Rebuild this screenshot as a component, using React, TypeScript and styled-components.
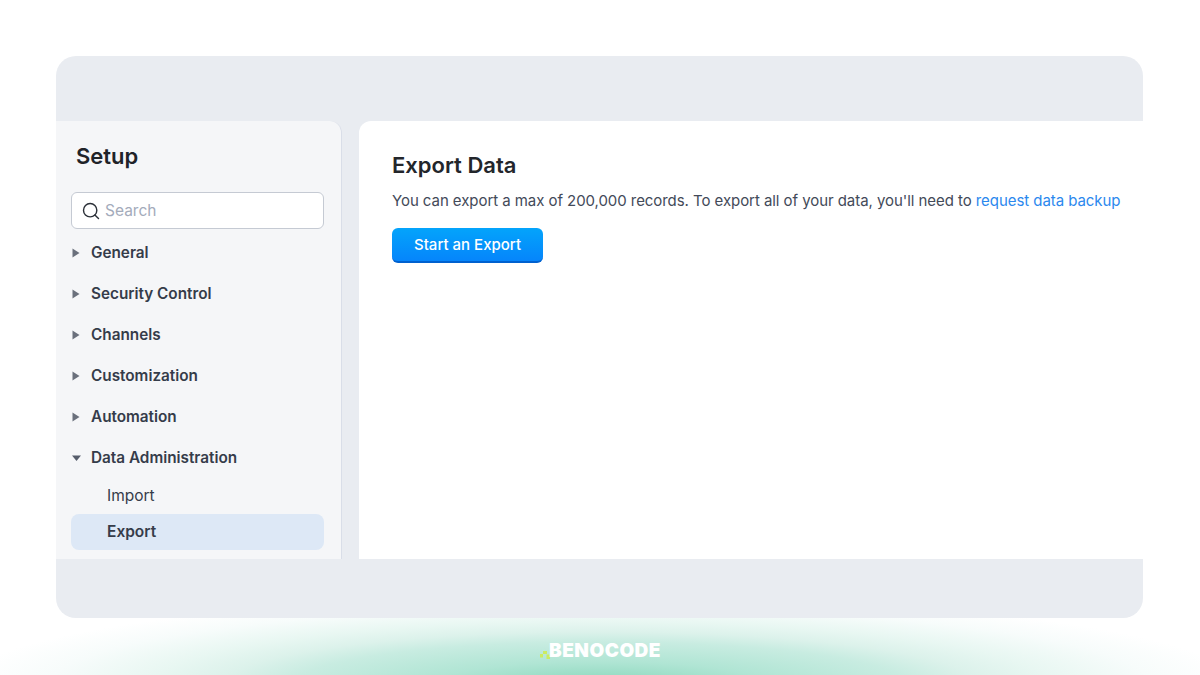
import React from 'react'
import styled, { createGlobalStyle } from 'styled-components'
import { Search } from 'lucide-react'

const GlobalStyle = createGlobalStyle`
  html, body { margin: 0; padding: 0; background: #fff; }
  body { font-family: Inter, "Noto Sans", sans-serif; -webkit-font-smoothing: antialiased; }
`

const Page = styled.div`
  width: 1200px;
  height: 675px;
  overflow: hidden;
  padding: 56px 56px 0;
  box-sizing: border-box;
  display: flex;
  flex-direction: column;
  background:
    radial-gradient(ellipse 640px 90px at 600px 685px, #97dcc4 0%, #97dcc4 10%, #b0e5d4 26%, #c8ece1 48%, #dcf2eb 59%, #e8f7f2 70%, #f7fcfb 86%, #ffffff 100%),
    #fff;
`

const Frame = styled.div`
  width: 1087px;
  height: 562px;
  flex: none;
  background: #e9ecf1;
  border-radius: 20px;
  padding: 65px 0 59px;
  box-sizing: border-box;
`

const Panels = styled.div`
  height: 100%;
  display: flex;
  gap: 17px;
`

const Sidebar = styled.aside`
  width: 286px;
  flex: none;
  box-sizing: border-box;
  background: #f5f6f8;
  border-right: 1px solid #d9dee8;
  border-top-right-radius: 12px;
  padding: 0 17px 0 15px;
`

const SideTitle = styled.h2`
  margin: 0;
  padding: 21px 0 0 5px;
  height: 71px;
  box-sizing: border-box;
  font-size: 22px;
  line-height: 28px;
  font-weight: 600;
  color: #1f2329;
`

const SearchBox = styled.div`
  height: 37px;
  box-sizing: border-box;
  display: flex;
  align-items: center;
  gap: 4px;
  padding-left: 9px;
  background: #fff;
  border: 1px solid #c5cad3;
  border-radius: 6px;
  margin-bottom: 3px;
  color: #2b3038;
`

const SearchText = styled.span`
  font-size: 15.5px;
  color: #a4abbb;
`

const NavList = styled.nav`
  display: flex;
  flex-direction: column;
`

const NavRow = styled.div`
  height: 41px;
  display: flex;
  align-items: center;
  gap: 10px;
  padding-left: 1px;
  font-size: 15.3px;
  font-weight: 600;
  color: #353c4a;
`

const SubList = styled.div`
  display: flex;
  flex-direction: column;
`

const SubRow = styled.div<{ $active?: boolean }>`
  height: 36px;
  display: flex;
  align-items: center;
  padding-left: 36px;
  padding-bottom: 2px;
  box-sizing: border-box;
  border-radius: 8px;
  font-size: 15.5px;
  font-weight: ${p => (p.$active ? 600 : 400)};
  color: #353c4a;
  background: ${p => (p.$active ? '#dde8f6' : 'transparent')};
`

const Main = styled.main`
  flex: 1;
  background: #fff;
  border-top-left-radius: 12px;
  padding: 28px 0 0 33px;
`

const Heading = styled.h1`
  margin: 0 0 8px;
  font-size: 22px;
  line-height: 32px;
  font-weight: 600;
  color: #23262b;
`

const Intro = styled.p`
  margin: 0 0 15px;
  font-size: 15px;
  letter-spacing: -0.06px;
  line-height: 24px;
  color: #434a59;
  white-space: nowrap;
`

const TextLink = styled.a`
  color: #2b88ee;
  text-decoration: none;
`

const PrimaryButton = styled.button`
  display: block;
  width: 151px;
  height: 35px;
  padding: 0;
  border: 0;
  border-bottom: 2px solid #0061cf;
  border-radius: 6px;
  background: linear-gradient(180deg, #04a4fb 0%, #0585fb 100%);
  color: #fff;
  font-family: inherit;
  font-size: 15px;
  font-weight: 500;
`

const Footer = styled.footer`
  flex: 1;
  display: flex;
  align-items: center;
  justify-content: center;
  padding-top: 8px;
`

const Logo = styled.div`
  display: flex;
  align-items: flex-end;
  color: #fff;
  font-family: Inter, sans-serif;
  font-weight: 900;
  font-size: 19px;
  line-height: 20px;
  letter-spacing: 0.5px;
`

const Mark = styled.svg`
  flex: none;
  margin: 0 -2px 1px 0;
`

const Caret = ({ open }: { open?: boolean }) => (
  <svg width="9" height="10" viewBox="0 0 9 10" aria-hidden="true">
    {open
      ? <path d="M0 2.5h9L4.5 8z" fill="#565d6b" />
      : <path d="M.5 .5 7.5 5 .5 9.5z" fill="#6a707c" />}
  </svg>
)

const LogoMark = () => (
  <Mark width="12" height="9" viewBox="0 0 12 9" aria-hidden="true">
    <path d="M1 3h3v3.5H1zM4 0h4v3H4zM7.5 3.5H11V8H7.5z" fill="#cbec62" />
  </Mark>
)

const groups = ['General', 'Security Control', 'Channels', 'Customization', 'Automation']

const App = () => (
  <Page>
    <GlobalStyle />
    <Frame>
      <Panels>
        <Sidebar>
          <SideTitle>Setup</SideTitle>
          <SearchBox>
            <Search size={20} strokeWidth={1.7} />
            <SearchText>Search</SearchText>
          </SearchBox>
          <NavList>
            {groups.map(name => (
              <NavRow key={name}><Caret />{name}</NavRow>
            ))}
            <NavRow><Caret open />Data Administration</NavRow>
            <SubList>
              <SubRow>Import</SubRow>
              <SubRow $active>Export</SubRow>
            </SubList>
          </NavList>
        </Sidebar>
        <Main>
          <Heading>Export Data</Heading>
          <Intro>
            You can export a max of 200,000 records. To export all of your data, you'll need to{' '}
            <TextLink href="#">request data backup</TextLink>
          </Intro>
          <PrimaryButton>Start an Export</PrimaryButton>
        </Main>
      </Panels>
    </Frame>
    <Footer>
      <Logo><LogoMark />BENOCODE</Logo>
    </Footer>
  </Page>
)

export default App
